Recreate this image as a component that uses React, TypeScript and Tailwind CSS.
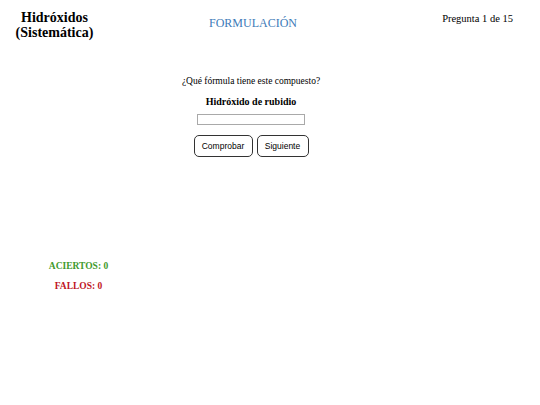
import { useState } from "react";

const serif = "font-['Liberation_Serif','Times_New_Roman',serif]";
const sans = "font-['Liberation_Sans',Arial,sans-serif]";

export default function App() {
  const [answer, setAnswer] = useState("");

  return (
    <div className={`w-[540px] h-[405px] bg-white text-black ${serif}`}>
      {/* Header */}
      <div className="flex items-start pt-[10px]">
        <div className="w-[109px] text-center text-[14px] font-bold leading-[15px]">
          Hidróxidos
          <br />
          (Sistemática)
        </div>
        <div className="w-[288px] pt-[4px] text-center text-[12px] text-[#3d7ab8]">
          FORMULACIÓN
        </div>
        <div className="ml-auto pr-[27px] pt-[1px] text-[10.5px]">Pregunta 1 de 15</div>
      </div>

      {/* Quiz */}
      <div className="mt-[34px] flex w-[502px] flex-col items-center text-center">
        <p className="text-[9.5px]">¿Qué fórmula tiene este compuesto?</p>
        <p className="mt-[6px] text-[10px] font-bold">Hidróxido de rubidio</p>
        <input
          value={answer}
          onChange={(e) => setAnswer(e.target.value)}
          className="mt-[5px] h-[11px] w-[108px] border border-[#a9a9a9] bg-white text-[8px] outline-none"
        />
        <div className={`mt-[10px] flex gap-[4px] text-[8.5px] ${sans}`}>
          <button className="h-[22px] w-[59px] rounded-[5px] border border-[#333] bg-white">
            Comprobar
          </button>
          <button className="h-[22px] w-[52px] rounded-[5px] border border-[#333] bg-white">
            Siguiente
          </button>
        </div>
      </div>

      {/* Scores */}
      <div className="mt-[102px] flex w-[157px] flex-col items-center gap-[5px] text-[9.5px] font-bold">
        <p className="text-[#3f9a2c]">ACIERTOS: 0</p>
        <p className="text-[#c0161f]">FALLOS: 0</p>
      </div>
    </div>
  );
}
